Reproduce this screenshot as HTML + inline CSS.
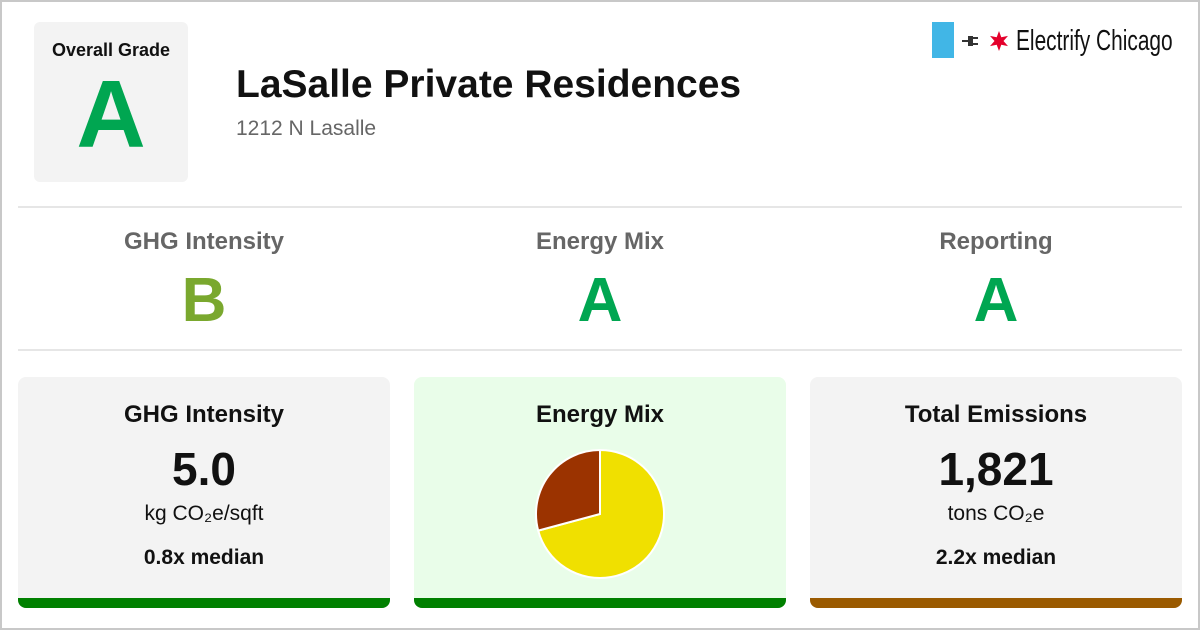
<!DOCTYPE html><html><head><meta charset="utf-8"><style>
*{margin:0;padding:0;box-sizing:border-box}
body{width:1200px;height:630px;background:#fff;font-family:"Liberation Sans",Roboto,sans-serif;position:relative;overflow:hidden}
.frame{position:absolute;inset:0;border:2px solid #c8c8c8}
.og{position:absolute;left:34px;top:22px;width:154px;height:160px;background:#f3f3f3;border-radius:6px;text-align:center}
.og .t{font-weight:bold;font-size:18px;margin-top:18px;color:#111}
.og .g{font-weight:bold;font-size:96px;color:#00a651;line-height:100px;margin-top:4px}
h1{position:absolute;left:236px;top:63px;font-size:39px;font-weight:bold;color:#111;white-space:nowrap}
.addr{position:absolute;left:236px;top:117px;font-size:21px;color:#666}
.hr{position:absolute;left:18px;width:1164px;height:2px;background:#e6e6e6}
.col{position:absolute;width:372px;text-align:center}
.col .l{font-size:24px;font-weight:bold;color:#666;margin-top:0}
.col .g{font-size:62px;font-weight:bold;line-height:70px;margin-top:10px}
.card{position:absolute;top:377px;width:372px;height:231px;border-radius:8px;background:#f3f3f3;text-align:center;overflow:hidden}
.card .h{font-size:24px;font-weight:bold;margin-top:24px;color:#111}
.card .n{font-size:46px;font-weight:bold;margin-top:14px;line-height:52px;color:#111}
.card .u{font-size:21px;color:#111;margin-top:7px}
.card .m{font-size:21px;font-weight:bold;margin-top:20px;color:#111}
.bar{position:absolute;left:0;bottom:0;width:100%;height:10px}
</style></head><body>
<div class="frame"></div>
<div class="og"><div class="t">Overall Grade</div><div class="g">A</div></div>
<h1>LaSalle Private Residences</h1>
<div class="addr">1212 N Lasalle</div>
<div style="position:absolute;left:932px;top:22px;width:22px;height:36px;background:#41b6e6"></div>
<svg style="position:absolute;left:962px;top:31px" width="56" height="20" viewBox="0 0 56 20"><rect x="0" y="9" width="6" height="2" fill="#333"/><path d="M6 5h5v10h-5z" fill="#333"/><rect x="11" y="6" width="5" height="2" fill="#333"/><rect x="11" y="12" width="5" height="2" fill="#333"/><polygon points="37,0 39.3,6.3 46,4.9 41.5,10 46,15.1 39.3,13.7 37,20 34.7,13.7 28,15.1 32.5,10 28,4.9 34.7,6.3" fill="#e4002b"/></svg>
<div style="position:absolute;left:1016px;top:25px;font-size:29px;color:#111;transform:scaleX(0.72);transform-origin:left;white-space:nowrap;font-family:'Liberation Sans Narrow','Liberation Sans',sans-serif">Electrify Chicago</div>
<div class="hr" style="top:206px"></div>
<div class="hr" style="top:349px"></div>
<div class="col" style="left:18px;top:228px"><div class="l">GHG Intensity</div><div class="g" style="color:#7aa82e">B</div></div>
<div class="col" style="left:414px;top:228px"><div class="l">Energy Mix</div><div class="g" style="color:#00a651">A</div></div>
<div class="col" style="left:810px;top:228px"><div class="l">Reporting</div><div class="g" style="color:#00a651">A</div></div>
<div class="card" style="left:18px"><div class="h">GHG Intensity</div><div class="n">5.0</div><div class="u">kg CO₂e/sqft</div><div class="m">0.8x median</div><div class="bar" style="background:#008000"></div></div>
<div class="card" style="left:414px;background:#e9fde9"><div class="h">Energy Mix</div>
<svg style="position:absolute;left:120px;top:71px" width="132" height="132" viewBox="534 448 132 132"><path d="M600,514 L600,450 A64,64 0 1 1 538.2,530.6 Z" fill="#f0e000" stroke="#fff" stroke-width="2"/><path d="M600,514 L538.2,530.6 A64,64 0 0 1 600,450 Z" fill="#9b3300" stroke="#fff" stroke-width="2"/></svg>
<div class="bar" style="background:#008000"></div></div>
<div class="card" style="left:810px"><div class="h">Total Emissions</div><div class="n">1,821</div><div class="u">tons CO₂e</div><div class="m">2.2x median</div><div class="bar" style="background:#9a5a00"></div></div>
</body></html>
